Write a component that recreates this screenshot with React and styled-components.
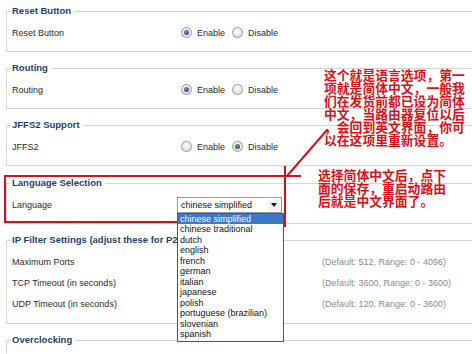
import React from "react";
import styled, { createGlobalStyle } from "styled-components";

const GlobalStyle = createGlobalStyle`
  html, body { margin: 0; padding: 0; background: #fff; overflow: hidden; }
  body { font-family: "Liberation Sans", Arial, sans-serif; }
`;

const Page = styled.div`
  position: relative;
  width: 472px;
  height: 354px;
  overflow: hidden;
  padding: 4px 0 0 6px;
  box-sizing: border-box;
`;

const Fieldset = styled.fieldset`
  margin: 0 -12px ${(p) => (p.$gap ? p.$gap : 9)}px 0;
  border: 1px solid #d6d6d6;
  padding: 4px 6px ${(p) => (p.$pb ? p.$pb : 8)}px 5px;
  min-width: 0;
`;

const Legend = styled.legend`
  font-family: "Liberation Sans", Arial, sans-serif;
  font-weight: bold;
  font-size: 9.5px;
  line-height: 14px;
  color: #1f3f69;
  padding: 0 3px 0 1px;
  margin-left: -1px;
  white-space: nowrap;
`;

const Row = styled.div`
  display: grid;
  grid-template-columns: 165px 145px auto;
  align-items: center;
  height: 21px;
  font-size: 9px;
  color: #2a2a2a;
  position: relative;
`;

const Label = styled.span`
  white-space: nowrap;
`;

const Hint = styled.span`
  color: #8a8a8a;
  white-space: nowrap;
`;

const RadioGroup = styled.div`
  display: flex;
  align-items: center;
  padding-left: 4px;
  white-space: nowrap;
`;

const RadioDot = styled.span`
  width: 9px;
  height: 9px;
  border-radius: 50%;
  border: 1px solid #9c9c9c;
  background: radial-gradient(circle at 50% 40%, #ffffff 0%, #e2e2e2 65%, #c8c8c8 100%);
  display: inline-flex;
  align-items: center;
  justify-content: center;
  margin-right: 5px;
  &::after {
    content: "";
    width: 5px;
    height: 5px;
    border-radius: 50%;
    background: ${(p) => (p.$checked ? "radial-gradient(circle at 40% 35%, #6d8db5, #1f3f66)" : "transparent")};
  }
`;

const RadioText = styled.span`
  margin-right: 7px;
`;

const SelectBox = styled.div`
  position: relative;
  width: 105px;
  height: 16px;
  box-sizing: border-box;
  border: 1px solid #9a9a9a;
  background: #fff;
  display: flex;
  align-items: center;
  padding-left: 3px;
  font-size: 9px;
  color: #111;
`;

const SelectArrow = styled.span`
  position: absolute;
  right: 1px;
  top: 1px;
  width: 12px;
  height: 12px;
  background: #f3f3f3;
  display: flex;
  align-items: center;
  justify-content: center;
  &::after {
    content: "";
    border-left: 3px solid transparent;
    border-right: 3px solid transparent;
    border-top: 4px solid #111;
  }
`;

const OptionList = styled.div`
  position: absolute;
  left: -1px;
  top: 15px;
  width: 107px;
  box-sizing: border-box;
  border: 1px solid #555;
  background: #fff;
  z-index: 5;
  padding-bottom: 1px;
`;

const Option = styled.div`
  height: 10.5px;
  line-height: 10.5px;
  padding-left: 2px;
  font-size: 9px;
  white-space: nowrap;
  overflow: hidden;
  color: ${(p) => (p.$active ? "#fff" : "#111")};
  background: ${(p) => (p.$active ? "#3a78c9" : "transparent")};
`;

const Marks = styled.svg`
  position: absolute;
  left: 0;
  top: 0;
  width: 472px;
  height: 354px;
  pointer-events: none;
  z-index: 3;
`;

const Note = styled.div`
  position: absolute;
  left: ${(p) => p.$x}px;
  top: ${(p) => p.$y}px;
  font-family: "Noto Sans CJK SC", sans-serif;
  font-weight: bold;
  font-size: 12.8px;
  line-height: 13px;
  color: #dd1018;
  white-space: pre;
  z-index: 4;
`;

const languages = [
  "chinese simplified",
  "chinese traditional",
  "dutch",
  "english",
  "french",
  "german",
  "italian",
  "japanese",
  "polish",
  "portuguese (brazilian)",
  "slovenian",
  "spanish",
];

function Radios({ on }) {
  return (
    <RadioGroup>
      <RadioDot $checked={on} />
      <RadioText>Enable</RadioText>
      <RadioDot $checked={!on} />
      <RadioText>Disable</RadioText>
    </RadioGroup>
  );
}

export default function App() {
  return (
    <>
      <GlobalStyle />
      <Page>
        <Fieldset>
          <Legend>Reset Button</Legend>
          <Row>
            <Label>Reset Button</Label>
            <Radios on />
          </Row>
        </Fieldset>
        <Fieldset>
          <Legend>Routing</Legend>
          <Row>
            <Label>Routing</Label>
            <Radios on />
          </Row>
        </Fieldset>
        <Fieldset $gap={10}>
          <Legend>JFFS2 Support</Legend>
          <Row>
            <Label>JFFS2</Label>
            <Radios on={false} />
          </Row>
        </Fieldset>
        <Fieldset $gap={9}>
          <Legend>Language Selection</Legend>
          <Row>
            <Label>Language</Label>
            <SelectBox>
              chinese simplified
              <SelectArrow />
              <OptionList>
                {languages.map((l, i) => (
                  <Option key={l} $active={i === 0}>
                    {l}
                  </Option>
                ))}
              </OptionList>
            </SelectBox>
          </Row>
        </Fieldset>
        <Fieldset $pb={9} $gap={9}>
          <Legend>IP Filter Settings (adjust these for P2P)</Legend>
          <Row>
            <Label>Maximum Ports</Label>
            <span />
            <Hint>(Default: 512, Range: 0 - 4096)</Hint>
          </Row>
          <Row>
            <Label>TCP Timeout (in seconds)</Label>
            <span />
            <Hint>(Default: 3600, Range: 0 - 3600)</Hint>
          </Row>
          <Row>
            <Label>UDP Timeout (in seconds)</Label>
            <span />
            <Hint>(Default: 120, Range: 0 - 3600)</Hint>
          </Row>
        </Fieldset>
        <Fieldset>
          <Legend>Overclocking</Legend>
          <Row />
        </Fieldset>

        <Marks viewBox="0 0 472 354">
          <g stroke="#d4121c" strokeWidth="2" fill="none" strokeLinecap="square">
            <polyline points="5,222 5,176 300,176" />
            <line x1="5" y1="222" x2="285" y2="222" />
            <line x1="285" y1="167" x2="285" y2="226" />
            <line x1="327" y1="130" x2="287" y2="176" />
          </g>
        </Marks>
        <Note $x={324} $y={68}>{"这个就是语言选项，第一\n项就是简体中文，一般我\n们在发货前都已设为简体\n中文，当路由器复位以后\n，会回到英文界面，你可\n以在这项里重新设置。"}</Note>
        <Note $x={318} $y={168}>{"选择简体中文后，点下\n面的保存，重启动路由\n后就是中文界面了。"}</Note>
      </Page>
    </>
  );
}
